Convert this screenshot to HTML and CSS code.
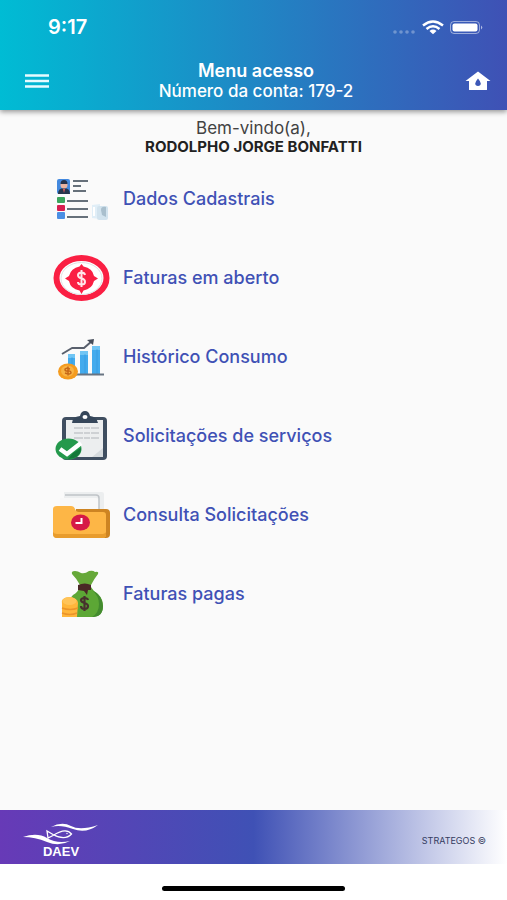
FILE: index.html
```html
<!DOCTYPE html>
<html lang="pt-BR">
<head>
<meta charset="utf-8">
<meta name="viewport" content="width=device-width, initial-scale=1">
<title>Menu acesso</title>
<link rel="stylesheet" href="styles.css">
</head>
<body>
<header class="top">
  <div class="status">
    <span class="time">9:17</span>
    <svg class="status-icons" width="92" height="16" viewBox="0 0 92 16" aria-hidden="true">
      <g fill="#fff" opacity=".3"><circle cx="4" cy="13" r="1.800"/><circle cx="10" cy="13" r="1.800"/><circle cx="16" cy="13" r="1.800"/><circle cx="22" cy="13" r="1.800"/></g>
      <g fill="none" stroke="#fff" stroke-width="2.500"><path d="M32 6.500Q42 -1.500 52 6.500"/><path d="M35.500 10Q42 4.600 48.500 10"/></g>
      <path d="M38.500 12Q42 9.200 45.500 12L42 15.200Z" fill="#fff"/>
      <rect x="59.500" y="2.500" width="29" height="12" rx="3.500" fill="none" stroke="#fff" opacity=".5"/>
      <rect x="61.500" y="4.500" width="25" height="8" rx="2" fill="#fff"/>
      <path d="M90 6.500q2.500 2 0 4z" fill="#fff" opacity=".6"/>
    </svg>
  </div>
  <div class="appbar">
    <button class="icon-button" type="button" aria-label="Menu">
      <svg width="24" height="14" viewBox="0 0 24 14"><path d="M0 1.500h24M0 7h24M0 12.500h24" stroke="#e8fbff" stroke-width="2.400"/></svg>
    </button>
    <div class="titles">
      <h1 class="title">Menu acesso</h1>
      <p class="account">Número da conta: 179-2</p>
    </div>
    <button class="icon-button end" type="button" aria-label="Início">
      <svg width="26" height="20" viewBox="0 0 26 20"><path fill="#fff" fill-rule="evenodd" d="M13 0.500L25.500 10H22v8.500q0 .5-.5.500h-17q-.5 0-.5-.5V10H.5ZM13 7.500q-2.800 3.300-2.800 5a2.800 2.400 0 0 0 5.600 0q0-1.700-2.800-5Z"/></svg>
    </button>
  </div>
</header>
<main class="content">
  <p class="hello">Bem-vindo(a),</p>
  <p class="user">RODOLPHO JORGE BONFATTI</p>
  <nav>
    <ul class="menu">
      <li><a class="item" href="#dados">
        <svg class="icon" viewBox="0 0 60 54" aria-hidden="true">
          <rect x="5" y="7" width="13" height="15" rx="2" fill="#4389df"/><path d="M6 22q0-6 6-6t6 6z" fill="#25364d"/><circle cx="12" cy="13" r="3.500" fill="#e9b3a0"/><path d="M8.500 12q0-4 3.500-4t3.500 4z" fill="#26324a"/><path d="M11 17h2l-1 4z" fill="#ef5b5b"/>
          <path d="M21 9h15M21 14h8M21 19h13M15 29h21M15 37h21M15 45h21" stroke="#66707a" stroke-width="2"/>
          <rect x="5" y="25" width="8" height="6" rx="1" fill="#3ba55d"/><rect x="5" y="33" width="8" height="6" rx="1" fill="#d81e50"/><rect x="5" y="40" width="8" height="7" rx="1" fill="#4a8fe4"/>
          <path d="M40 33l8-1v15l-8-1z" fill="#e0eef7"/><rect x="45" y="34" width="11" height="14" rx="2" fill="#d2e3ee"/><path d="M49 38q0-4 5-3v10l-4-2z" fill="#a9bfcd"/><path d="M42 35v9" stroke="#fff" stroke-width="2"/>
        </svg><span>Dados Cadastrais</span></a></li>
      <li><a class="item" href="#abertas">
        <svg class="icon" viewBox="0 0 60 54" aria-hidden="true">
          <ellipse cx="29.500" cy="27" rx="25" ry="20" fill="#fff" stroke="#fa1f43" stroke-width="6"/>
          <ellipse cx="29.500" cy="27.500" rx="20.500" ry="16" fill="none" stroke="#dfe2e4" stroke-width="1"/>
          <path d="M29.500 13l2 2.500q9 1.500 10.500 9.500L46 27.500l-4 2.500q-2 8-10.500 9.500L29.500 43l-2-3.500Q18.500 38 17 30l-4-2.500 4-2.500q2-8 10.500-9.500z" fill="#fa1f43"/>
          <path d="M33 24q-.5-2.500-3.500-2.500T26 24q0 2.500 3.500 3.300T33 31q0 2.500-3.500 2.500T26 31M29.500 19v17" fill="none" stroke="#ffe7eb" stroke-width="2"/>
        </svg><span>Faturas em aberto</span></a></li>
      <li><a class="item" href="#historico">
        <svg class="icon" viewBox="0 0 60 54" aria-hidden="true">
          <path d="M16 26h7v18h-7zM28 22h8v22h-8zM40 17h8v27h-8z" fill="#43abed"/><path d="M16 24h7v4h-7zM28 21h8v4h-8zM40 16h8v4h-8z" fill="#70c5f4"/><path d="M20 27v17M33 24v20M45 19v25" stroke="#2d91d8" stroke-width="1.500" opacity=".3"/>
          <path d="M16 44.500h36" stroke="#687482" stroke-width="2"/><path d="M10 24l10-6h12l8-7" fill="none" stroke="#59606d" stroke-width="2" stroke-linejoin="round"/><path d="M35 10l7-1-1 6z" fill="#454c59"/>
          <ellipse cx="16" cy="41.500" rx="10" ry="8" fill="#f49b1f"/><ellipse cx="15.500" cy="41" rx="6.500" ry="5.500" fill="#f8b344"/><path d="M18 39q-5-1.500-5 .5t3 1.500 3 2q-1 2-6 0M16 36.500v9" fill="none" stroke="#c56718" stroke-width="1.500"/>
        </svg><span>Histórico Consumo</span></a></li>
      <li><a class="item" href="#solicitar">
        <svg class="icon" viewBox="0 0 60 54" aria-hidden="true">
          <rect x="10" y="8" width="45" height="43" rx="4" fill="#3f4e60"/><path d="M14 11h37v37H14z" fill="#eceeef"/><path d="M51 39v9H40z" fill="#d5dadd"/>
          <path d="M22 19h25M22 24h25M22 29h25" stroke="#c3c8cc" stroke-width="1.500" stroke-dasharray="9 1 6 1"/>
          <path d="M20 14q0-6 8-7 1-5 5-5t5 5q7 1 8 7z" fill="#35465a"/><ellipse cx="33" cy="8" rx="2.500" ry="2" fill="#fff"/>
          <ellipse cx="16.500" cy="40" rx="13" ry="10.500" fill="#24994c"/><path d="M16 50q13-1 13-11l-8 5z" fill="#15783a"/><path d="M8 40l7 5 14-11" fill="none" stroke="#fff" stroke-width="4.500"/>
        </svg><span>Solicitações de serviços</span></a></li>
      <li><a class="item" href="#consultar">
        <svg class="icon" viewBox="0 0 60 54" aria-hidden="true">
          <path d="M12 4h38q2 0 2 2v20H12z" fill="#eceeef"/><path d="M8 10h36q3 0 3 3v18H8z" fill="#f8f8f8"/><path d="M13 7h31q3 0 3 3v16" fill="none" stroke="#bfc3c7" stroke-width="1.500"/>
          <path d="M24 21h30q4 0 4 4v21q0 4-4 4H24z" fill="#cd8422"/>
          <path d="M1 21q0-3 4-3h14q3 0 4 3t4 3h24q3 0 3 3v20q0 3-4 3H5q-4 0-4-4z" fill="#fdb646"/><path d="M1 44q1 2 4 2h44q4 0 5-2v3q0 3-4 3H5q-4 0-4-4z" fill="#e89c2d"/>
          <ellipse cx="28.500" cy="34.500" rx="9.500" ry="8" fill="#d61946"/><path d="M29.500 30v5h-6" fill="none" stroke="#fff" stroke-width="2"/>
        </svg><span>Consulta Solicitações</span></a></li>
      <li><a class="item" href="#pagas">
        <svg class="icon" viewBox="0 0 60 54" aria-hidden="true">
          <path d="M28 18q-3-6-8-11-1-3 3-3 3 0 6 2 4 1 8-2 4-1 6 1 4-1 3 2-4 5-7 11z" fill="#66a839"/>
          <path d="M28 20h11q2 4 7 7 5 5 5 12 0 10-9 11H24q-8-1-8-11 0-6 5-11 5-3 7-8z" fill="#5ca735"/><path d="M40 23q10 5 11 16 0 11-11 11 7-4 7-13 0-8-7-14z" fill="#438b2f"/>
          <path d="M26 18q7-3 13 0v5h-3l-1 5-3-4-6-1z" fill="#4a2826"/>
          <path d="M36 33q-.5-2-3.500-2T29 33q0 2 3.500 3t3.500 3q0 3-3.500 3T29 39M32.500 29v15" fill="none" stroke="#47312d" stroke-width="2.200"/>
          <path d="M10 37q-2-6 7-7 9 1 9 6l-1 14H10z" fill="#ffb63b"/><ellipse cx="17.500" cy="34" rx="7" ry="4" fill="#ffc459"/><path d="M10 41q8 3 16 0M10 46q8 3 15 0" fill="none" stroke="#eb942a" stroke-width="1.500"/>
        </svg><span>Faturas pagas</span></a></li>
    </ul>
  </nav>
</main>
<footer class="footer">
  <div class="brand">
    <svg width="78" height="23" viewBox="0 0 76 23" aria-hidden="true" fill="#fff">
      <path d="M28 4Q39-2 48 3T75 2Q63 11 50 6T28 4Z"/>
      <path d="M0 14Q14 9 24 15T47 18Q36 24 24 19T0 14Z"/>
      <path fill="none" stroke="#fff" stroke-width="1.300" d="M30 12.500Q43 4 48.500 11 42 18 30 11.500L24 8l1 7z"/><circle cx="44" cy="10.500" r=".7"/>
    </svg>
    <strong class="brand-name">DAEV</strong>
  </div>
  <small class="credit">STRATEGOS ©</small>
</footer>
<div class="home-area"><div class="home-bar"></div></div>
</body>
</html>
```
FILE: styles.css
```css
* { box-sizing: border-box; }
body {
  margin: 0;
  min-height: 100vh;
  display: flex;
  flex-direction: column;
  background: #fff;
  font-family: Inter, "Liberation Sans", sans-serif;
}
h1, p, ul { margin: 0; padding: 0; }
.top {
  position: relative;
  color: #fff;
  background: linear-gradient(90deg, #00bcd4, #3f51b5);
  box-shadow: 0 2px 5px rgba(0, 0, 0, .4);
}
.status {
  height: 54px;
  padding: 0 24px 0 48px;
  display: flex;
  align-items: center;
  justify-content: space-between;
}
.time { font-size: 20px; font-weight: 600; }
.status-icons { display: block; }
.appbar {
  height: 56px;
  padding: 0 16px 2px 25px;
  display: grid;
  grid-template-columns: 32px 1fr 36px;
  align-items: center;
}
.icon-button {
  display: flex;
  justify-content: flex-start;
  padding: 0;
  border: 0;
  background: none;
  cursor: pointer;
}
.icon-button.end { justify-content: flex-end; }
.titles { text-align: center; }
.title { font-size: 18px; font-weight: 600; line-height: 20px; }
.account { font-size: 17px; font-weight: 500; line-height: 20px; }
.content {
  flex: 1;
  padding-top: 9px;
  background: #fafafa;
}
.hello, .user { text-align: center; }
.hello { font-size: 17px; line-height: 18px; color: #424242; }
.user { font-size: 15px; line-height: 20px; font-weight: 700; color: #212121; }
.menu { list-style: none; padding: 2px 52px 0; }
.item {
  height: 79px;
  display: flex;
  align-items: center;
  gap: 11px;
  color: #3f51b5;
  font-size: 18px;
  font-weight: 500;
  text-decoration: none;
}
.icon { width: 60px; height: 54px; flex: none; }
.footer {
  height: 54px;
  padding: 0 21px 0 22px;
  display: flex;
  align-items: center;
  justify-content: space-between;
  background: linear-gradient(90deg, #673ab7, #3f51b5 50%, #fff);
}
.brand { display: flex; flex-direction: column; align-items: center; color: #fff; padding-top: 7px; }
.brand-name { font-family: "Liberation Sans", sans-serif; font-size: 13px; line-height: 12px; }
.credit { padding-top: 7px; font-size: 9px; color: #343b60; }
.home-area {
  height: 36px;
  display: flex;
  justify-content: center;
  align-items: flex-end;
  padding-bottom: 9px;
}
.home-bar { width: 36%; height: 5px; border-radius: 3px; background: #000; }
```
